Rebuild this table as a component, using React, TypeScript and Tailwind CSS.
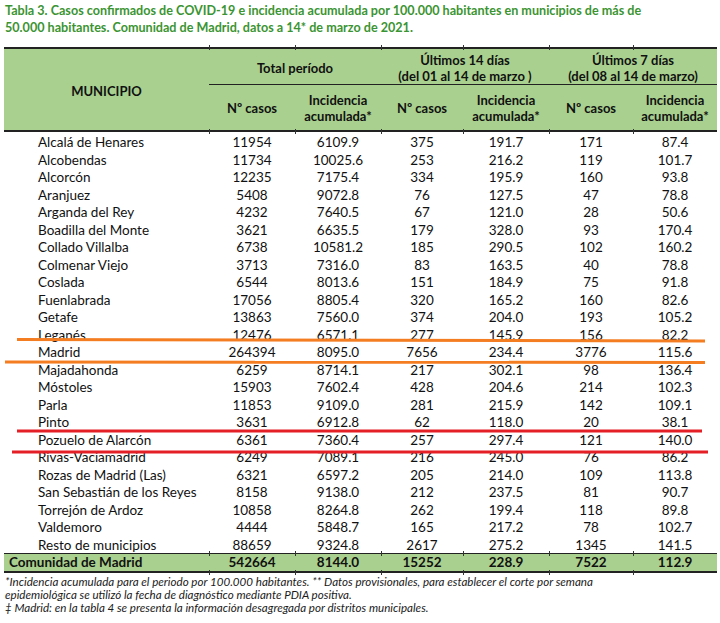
const ROWS: [string, string, string, string, string, string, string][] = [
  ['Alcalá de Henares', '11954', '6109.9', '375', '191.7', '171', '87.4'],
  ['Alcobendas', '11734', '10025.6', '253', '216.2', '119', '101.7'],
  ['Alcorcón', '12235', '7175.4', '334', '195.9', '160', '93.8'],
  ['Aranjuez', '5408', '9072.8', '76', '127.5', '47', '78.8'],
  ['Arganda del Rey', '4232', '7640.5', '67', '121.0', '28', '50.6'],
  ['Boadilla del Monte', '3621', '6635.5', '179', '328.0', '93', '170.4'],
  ['Collado Villalba', '6738', '10581.2', '185', '290.5', '102', '160.2'],
  ['Colmenar Viejo', '3713', '7316.0', '83', '163.5', '40', '78.8'],
  ['Coslada', '6544', '8013.6', '151', '184.9', '75', '91.8'],
  ['Fuenlabrada', '17056', '8805.4', '320', '165.2', '160', '82.6'],
  ['Getafe', '13863', '7560.0', '374', '204.0', '193', '105.2'],
  ['Leganés', '12476', '6571.1', '277', '145.9', '156', '82.2'],
  ['Madrid', '264394', '8095.0', '7656', '234.4', '3776', '115.6'],
  ['Majadahonda', '6259', '8714.1', '217', '302.1', '98', '136.4'],
  ['Móstoles', '15903', '7602.4', '428', '204.6', '214', '102.3'],
  ['Parla', '11853', '9109.0', '281', '215.9', '142', '109.1'],
  ['Pinto', '3631', '6912.8', '62', '118.0', '20', '38.1'],
  ['Pozuelo de Alarcón', '6361', '7360.4', '257', '297.4', '121', '140.0'],
  ['Rivas-Vaciamadrid', '6249', '7089.1', '216', '245.0', '76', '86.2'],
  ['Rozas de Madrid (Las)', '6321', '6597.2', '205', '214.0', '109', '113.8'],
  ['San Sebastián de los Reyes', '8158', '9138.0', '212', '237.5', '81', '90.7'],
  ['Torrejón de Ardoz', '10858', '8264.8', '262', '199.4', '118', '89.8'],
  ['Valdemoro', '4444', '5848.7', '165', '217.2', '78', '102.7'],
  ['Resto de municipios', '88659', '9324.8', '2617', '275.2', '1345', '141.5'],
];

const TOTAL = ['Comunidad de Madrid', '542664', '8144.0', '15252', '228.9', '7522', '112.9'];

const COLS = 'grid grid-cols-[205px_86px_86px_82px_86px_84px_84px]';

// column boundaries where the spreadsheet leaves small grid ticks on the thick borders
const TICKS = [209, 295, 381, 463, 549, 633];
const TICK_ROWS = [46, 130, 552, 571];

function Marks() {
  return (
    <svg className="pointer-events-none absolute left-0 top-0" width="720" height="623">
      {TICK_ROWS.map((y) =>
        TICKS.map((x) => <line key={`${x}-${y}`} x1={x + 0.5} y1={y - 1} x2={x + 0.5} y2={y + 4} stroke="#333" strokeWidth="1" />),
      )}
      <line x1="17" y1="339.5" x2="705" y2="341" stroke="#f47d22" strokeWidth="3" />
      <line x1="5" y1="362" x2="705" y2="362.5" stroke="#f47d22" strokeWidth="3" />
      <line x1="17" y1="431" x2="702" y2="431" stroke="#e51f26" strokeWidth="3" />
      <line x1="12" y1="452" x2="708" y2="452" stroke="#e51f26" strokeWidth="3" />
    </svg>
  );
}

export default function App() {
  return (
    <div className="relative h-[623px] w-[720px] overflow-hidden bg-white font-['Lato',_'Liberation_Sans',_sans-serif] text-[#111]">
      <div className="px-[5px] pt-[2px] text-[12.6px] font-bold leading-[17px] text-[#3b9432]">
        <div>Tabla 3. Casos confirmados de COVID-19 e incidencia acumulada por 100.000 habitantes en municipios de más de</div>
        <div>50.000 habitantes. Comunidad de Madrid, datos a 14* de marzo de 2021.</div>
      </div>

      <div className="ml-[4px] mt-[11px] w-[713px]">
        <div className="border-b-2 border-t-2 border-[#222] bg-[#a9d08e] text-[13px] font-bold leading-[16px]">
          <div className="grid grid-cols-[205px_508px]">
            <div className="flex items-center justify-center pt-[2px]">MUNICIPIO</div>
            <div>
              <div className="grid h-[36px] grid-cols-[172px_168px_168px] border-b border-[#222]">
                <div className="flex items-center justify-center pt-[2px]">Total período</div>
                <div className="flex flex-col items-center justify-center pt-[2px]">
                  <span>Últimos 14 días</span>
                  <span>(del 01 al 14 de marzo )</span>
                </div>
                <div className="flex flex-col items-center justify-center pt-[2px]">
                  <span>Últimos 7 días</span>
                  <span>(del 08 al 14 de marzo)</span>
                </div>
              </div>
              <div className="grid h-[45px] grid-cols-[86px_86px_82px_86px_84px_84px] text-center">
                {['n', 'i', 'n', 'i', 'n', 'i'].map((k, i) =>
                  k === 'n' ? (
                    <div key={i} className="flex items-center justify-center">Nº casos</div>
                  ) : (
                    <div key={i} className="flex flex-col items-center justify-center pt-[1px]">
                      <span>Incidencia</span>
                      <span>acumulada*</span>
                    </div>
                  ),
                )}
              </div>
            </div>
          </div>
        </div>

        <div className="mt-[1px] text-[13.5px] leading-[19px]">
          {ROWS.map((row) => (
            <div key={row[0]} className={`${COLS} h-[17.5px]`}>
              <div className="pl-[34px] whitespace-nowrap">{row[0]}</div>
              {row.slice(1).map((v, i) => (
                <div key={i} className="text-center">
                  {v}
                </div>
              ))}
            </div>
          ))}
        </div>

        <div className={`${COLS} h-[20px] border-b-2 border-t border-[#222] bg-[#a9d08e] text-[13.5px] font-bold leading-[17px]`}>
          <div className="pl-[5px] whitespace-nowrap">{TOTAL[0]}</div>
          {TOTAL.slice(1).map((v, i) => (
            <div key={i} className="text-center">
              {v}
            </div>
          ))}
        </div>
      </div>

      <div className="px-[5px] pt-[2px] text-[11.6px] italic leading-[13px] text-[#1a1a1a]">
        <div className="whitespace-nowrap">*Incidencia acumulada para el periodo por 100.000 habitantes. ** Datos provisionales, para establecer el corte por semana</div>
        <div>epidemiológica se utilizó la fecha de diagnóstico mediante PDIA positiva.</div>
        <div>‡ Madrid: en la tabla 4 se presenta la información desagregada por distritos municipales.</div>
      </div>

      <Marks />
    </div>
  );
}
